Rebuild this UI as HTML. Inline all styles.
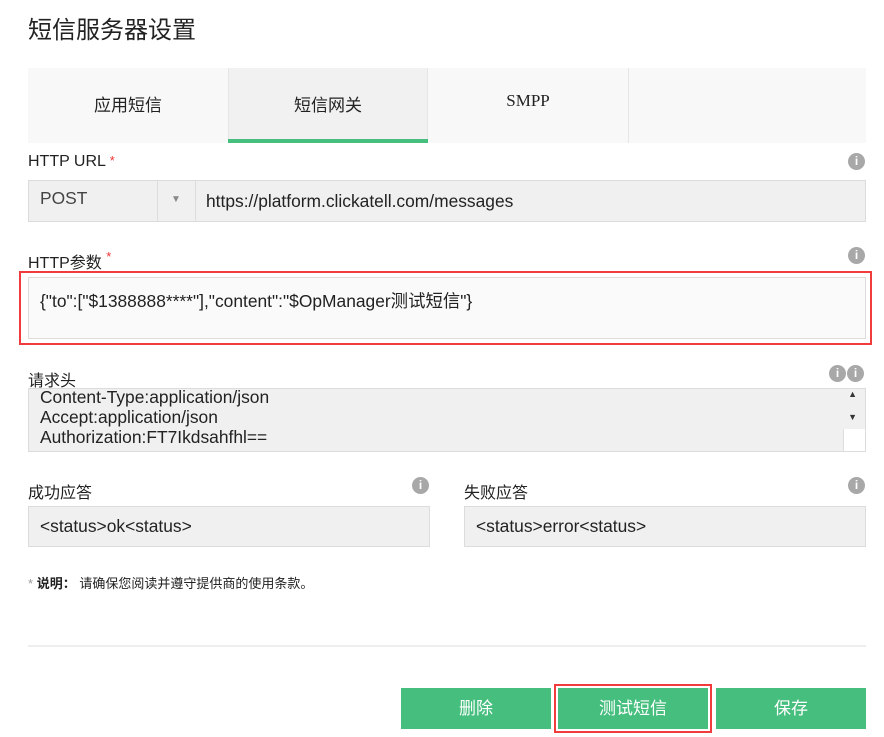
<!DOCTYPE html>
<html><head><meta charset="utf-8"><style>
*{margin:0;padding:0;box-sizing:border-box}
body{width:884px;height:737px;background:#fff;font-family:"Liberation Sans","Noto Sans CJK SC",sans-serif;color:#222;position:relative;overflow:hidden}
.a{position:absolute}
.info{position:absolute;width:17px;height:17px;border-radius:50%;background:#a8a8a8;color:#fff;font:bold 12px "Liberation Sans",sans-serif;text-align:center;line-height:17px}
.lbl{position:absolute;font-size:16px;color:#222}
.req{color:#e33;font-size:13px;vertical-align:top}
.fld{position:absolute;background:#f0f0f0;border:1px solid #dcdcdc;font-size:16px;color:#222}
.t{font-size:17.4px;white-space:nowrap}
.btn{position:absolute;top:688px;height:41px;background:#45be7e;color:#fff;font-size:17px;text-align:center;line-height:41px}
</style></head><body>
<div class="a" style="left:28px;top:10px;font-size:24px;color:#222">短信服务器设置</div>
<div class="a" style="left:28px;top:68px;width:838px;height:75px;background:#f8f8f8"></div>
<div class="a" style="left:228px;top:68px;width:200px;height:75px;background:#f1f1f1;border-left:1px solid #e6e6e6;border-right:1px solid #e6e6e6"></div>
<div class="a" style="left:628px;top:68px;width:1px;height:75px;background:#e6e6e6"></div>
<div class="a" style="left:228px;top:139px;width:200px;height:4px;background:#45be7e"></div>
<div class="a" style="left:28px;top:91px;width:200px;text-align:center;font-size:17px">应用短信</div>
<div class="a" style="left:228px;top:91px;width:200px;text-align:center;font-size:17px">短信网关</div>
<div class="a" style="left:428px;top:91px;width:200px;text-align:center;font-size:17px;font-family:'Liberation Serif',serif">SMPP</div>

<div class="lbl" style="left:28px;top:153px">HTTP URL <span class="req">*</span></div>
<div class="info" style="left:848px;top:153px">i</div>
<div class="fld" style="left:28px;top:180px;width:838px;height:42px"></div>
<div class="a" style="left:157px;top:181px;width:39px;height:40px;border-left:1px solid #dcdcdc;border-right:1px solid #dcdcdc"></div>
<div class="a t" style="left:40px;top:188px;color:#444">POST</div>
<div class="a" style="left:171px;top:194px;font-size:10px;color:#888">▼</div>
<div class="a t" style="left:206px;top:191px">https://platform.clickatell.com/messages</div>

<div class="lbl" style="left:28px;top:249px">HTTP参数 <span class="req">*</span></div>
<div class="info" style="left:848px;top:247px">i</div>
<div class="a" style="left:19px;top:271px;width:853px;height:74px;border:2px solid #f03c3c"></div>
<div class="a" style="left:28px;top:277px;width:838px;height:62px;background:#fafafa;border:1px solid #dcdcdc"></div>
<div class="a t" style="left:40px;top:288px">{"to":["$1388888****"],"content":"$OpManager测试短信"}</div>

<div class="lbl" style="left:28px;top:367px">请求头</div>
<div class="info" style="left:829px;top:365px">i</div>
<div class="info" style="left:847px;top:365px">i</div>
<div class="fld" style="left:28px;top:388px;width:838px;height:64px;overflow:hidden">
<div class="t" style="position:absolute;left:11px;top:-2px;line-height:20px">Content-Type:application/json<br>Accept:application/json<br>Authorization:FT7Ikdsahfhl==</div>
<div style="position:absolute;right:8px;top:0;font-size:9px;color:#333">▲</div>
<div style="position:absolute;right:8px;top:23px;font-size:9px;color:#333">▼</div>
<div style="position:absolute;right:0;top:40px;width:22px;height:23px;background:#fff;border-left:1px solid #ddd"></div>
</div>

<div class="lbl" style="left:28px;top:479px">成功应答</div>
<div class="info" style="left:412px;top:477px">i</div>
<div class="fld" style="left:28px;top:506px;width:402px;height:41px"></div>
<div class="a t" style="left:40px;top:516px">&lt;status&gt;ok&lt;status&gt;</div>
<div class="lbl" style="left:464px;top:479px">失败应答</div>
<div class="info" style="left:848px;top:477px">i</div>
<div class="fld" style="left:464px;top:506px;width:402px;height:41px"></div>
<div class="a t" style="left:476px;top:516px">&lt;status&gt;error&lt;status&gt;</div>

<div class="a" style="left:28px;top:573px;font-size:13px"><span style="color:#999">*</span> <b>说明：</b> 请确保您阅读并遵守提供商的使用条款。</div>
<div class="a" style="left:28px;top:645px;width:838px;height:2px;background:#eee"></div>

<div class="btn" style="left:401px;width:150px">删除</div>
<div class="btn" style="left:558px;width:150px">测试短信</div>
<div class="a" style="left:554px;top:684px;width:158px;height:49px;border:2px solid #f03c3c"></div>
<div class="btn" style="left:716px;width:150px">保存</div>
</body></html>
